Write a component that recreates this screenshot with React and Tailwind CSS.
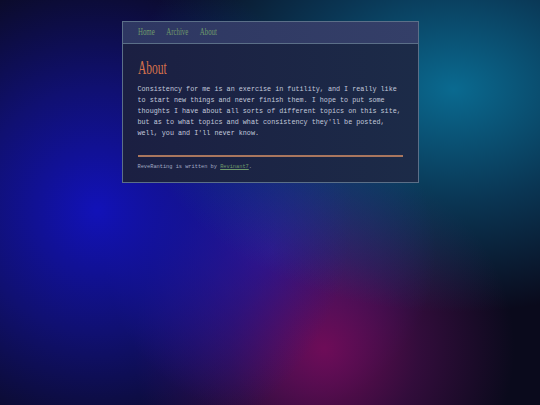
export default function App() {
    const links = ['Home', 'Archive', 'About']

    return (
        <div className="relative h-[405px] w-full overflow-hidden bg-[#0a0a1c] bg-[radial-gradient(ellipse_at_84%_22%,#0a6a90_0%,rgba(10,90,130,0.55)_25%,transparent_50%),radial-gradient(circle_at_18%_52%,#1212b8_0%,rgba(20,20,170,0.6)_25%,transparent_52%),radial-gradient(circle_at_60%_86%,#6e0c58_0%,rgba(90,15,90,0.5)_20%,transparent_40%),radial-gradient(circle_at_50%_62%,#2a1a98_0%,transparent_45%)] pt-[21px]">
            <div className="mx-auto w-[297px] border-[1.5px] border-[#5b6f88] bg-[linear-gradient(90deg,#1b1f42,#1c2b48)]">
                <nav className="flex h-[22px] items-center border-b-[1.5px] border-[#5b6f88] bg-[linear-gradient(90deg,#2e3762,#343f68)] px-[15px]">
                    <div className="flex origin-left scale-x-[0.72] gap-[16px]">
                        {links.map((l) => (
                            <a
                                key={l}
                                className="text-[9.5px] leading-none text-[#6f9a6c]"
                                style={{ fontFamily: '"Liberation Serif", serif' }}
                            >
                                {l}
                            </a>
                        ))}
                    </div>
                </nav>
                <div className="px-[15px] pt-[14px] pb-[11px]" style={{ fontFamily: '"Liberation Mono", monospace' }}>
                    <h1
                        className="origin-left scale-x-[0.64] text-[18px] leading-[20px] text-[#d5714c]"
                        style={{ fontFamily: '"Liberation Serif", serif' }}
                    >
                        About
                    </h1>
                    <p className="mt-[6px] text-[6.75px] leading-[11px] text-[#c2c9dc]">
                        Consistency for me is an exercise in futility, and I really like to start new things and never finish them. I hope to put some thoughts I have about all sorts of different topics on this site, but as to what topics and what consistency they'll be posted, well, you and I'll never know.
                    </p>
                    <div className="mt-[16px] h-[1.5px] bg-[#a9765e]"></div>
                    <p className="mt-[6px] text-[5.3px] leading-[8px] text-[#a3abc4]">
                        ReveRanting is written by <a className="text-[#6f9a6c] underline">Revinant7</a>.
                    </p>
                </div>
            </div>
        </div>
    )
}
